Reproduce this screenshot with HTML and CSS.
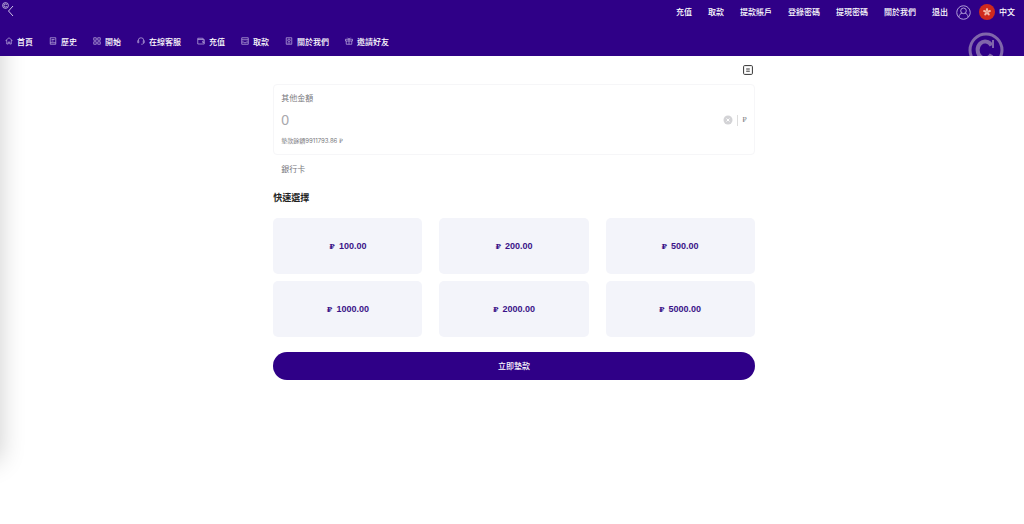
FILE: index.html
```
<!DOCTYPE html>
<html lang="zh-Hant">
<head>
  <meta charset="UTF-8">
  <title>充值</title>
  <link rel="stylesheet" href="styles.css">
</head>
<body>
  <header class="header">
    <div class="top-bar">
      <button class="back" aria-label="返回">
        <svg class="mini-logo" viewBox="0 0 8 8"><circle cx="4" cy="4" r="3.3"/><path d="M5.4 3A1.7 1.7 0 1 0 5.4 5"/></svg>
        <svg class="arrow" viewBox="0 0 7 12"><path d="M6 1 1.5 6 6 11"/></svg>
      </button>
      <nav class="links">
        <a href="#">充值</a>
        <a href="#">取款</a>
        <a href="#">提款賬戶</a>
        <a href="#">登錄密碼</a>
        <a href="#">提現密碼</a>
        <a href="#">關於我們</a>
        <a href="#">退出</a>
      </nav>
      <a class="avatar" href="#" aria-label="帳戶">
        <svg viewBox="0 0 16 16"><circle cx="8" cy="8" r="7.2"/><circle cx="8" cy="6.2" r="3"/><path d="M3 13c.4-2.600 1.700-3.800 3.200-4.200M13 13c-.4-2.600-1.700-3.800-3.200-4.200"/></svg>
      </a>
      <button class="lang">
        <svg viewBox="0 0 16 16"><circle cx="8" cy="8" r="8" fill="#cf2a1d"/><g fill="#f3b9a8"><ellipse cx="8" cy="5.800" rx="1.100" ry="1.900"/><ellipse cx="8" cy="5.800" rx="1.100" ry="1.900" transform="rotate(72 8 8)"/><ellipse cx="8" cy="5.800" rx="1.100" ry="1.900" transform="rotate(144 8 8)"/><ellipse cx="8" cy="5.800" rx="1.100" ry="1.900" transform="rotate(216 8 8)"/><ellipse cx="8" cy="5.800" rx="1.100" ry="1.900" transform="rotate(288 8 8)"/></g></svg>
        中文
      </button>
    </div>
    <nav class="menu">
      <a href="#"><svg viewBox="0 0 16 16"><path d="M8 1.500 14.500 7h-2v7h-3v-4h-3v4h-3V7h-2z"/></svg>首頁</a>
      <a href="#"><svg viewBox="0 0 16 16"><path d="M2.500 1.500h11v13h-11zM5 5h6M5 8h4M2.500 11.500h11"/></svg>歷史</a>
      <a href="#"><svg viewBox="0 0 16 16"><path d="M1.500 1.500h5v5h-5zM9.500 1.500h5v5h-5zM1.500 9.500h5v5h-5zM9.500 9.500h5v5h-5z"/></svg>開始</a>
      <a href="#"><svg viewBox="0 0 16 16"><path d="M2.500 8V7a5.500 5.500 0 0 1 11 0v1M1.500 7.500h2v4h-2zM12.500 7.500h2v4h-2zM13.500 11.500c0 2-2 3-5 3"/></svg>在線客服</a>
      <a href="#"><svg viewBox="0 0 16 16"><path d="M1.500 2.500h10M1.500 2.500v11.500h13v-9h-13M14.500 8h-3v3h3M12 2v3"/></svg>充值</a>
      <a href="#"><svg viewBox="0 0 16 16"><path d="M1.500 1.500h13v13h-13zM1.500 5.500h13M1.500 10h4l1 1.500h3l1-1.500h4"/></svg>取款</a>
      <a href="#"><svg viewBox="0 0 16 16"><path d="M2.500 1.500h11v13h-11zM5 12h6"/><circle cx="8" cy="6.500" r="2.500"/></svg>關於我們</a>
      <a href="#"><svg viewBox="0 0 16 16"><path d="M1 4.500h14v3.500H1zM2.500 8v6.500h11V8M8 4.500v10M8 4.500l-3-3M8 4.500l3-3"/></svg>邀請好友</a>
    </nav>
    <svg class="brand" viewBox="0 0 36 36"><circle cx="18" cy="18" r="16"/><path class="letter" d="M23.500 13.500A7.500 8.500 0 1 0 23.500 22.500"/><path class="serif" d="M25 8v8"/></svg>
  </header>

  <aside class="drawer" aria-hidden="true"></aside>

  <main class="deposit">
    <button class="records" aria-label="記錄">
      <svg viewBox="0 0 10 10"><rect x=".6" y=".6" width="8.800" height="8.800" rx="1"/><path d="M3.200 4h3.600M3.200 6.200h3.600"/></svg>
    </button>

    <section class="amount-box">
      <label for="amount">其他金額</label>
      <div class="amount-row">
        <input id="amount" type="text" inputmode="decimal" placeholder="0">
        <button class="clear" aria-label="清除">
          <svg viewBox="0 0 10 10"><circle cx="5" cy="5" r="4.500" fill="#d3d3d6"/><path d="M3.500 3.500l3 3M6.500 3.500l-3 3" stroke="#fff"/></svg>
        </button>
        <span class="currency">₽</span>
      </div>
      <p class="balance">墊款餘額9911793.86 <span class="rub">₽</span></p>
    </section>

    <p class="bank">銀行卡</p>

    <h2>快速選擇</h2>
    <div class="quick">
      <button><span class="rub">₽</span>100.00</button>
      <button><span class="rub">₽</span>200.00</button>
      <button><span class="rub">₽</span>500.00</button>
      <button><span class="rub">₽</span>1000.00</button>
      <button><span class="rub">₽</span>2000.00</button>
      <button><span class="rub">₽</span>5000.00</button>
    </div>

    <button class="submit">立即墊款</button>
  </main>
</body>
</html>
```

FILE: styles.css
```
* {
  box-sizing: border-box;
}

body {
  margin: 0;
  min-height: 100vh;
  position: relative;
  overflow-x: hidden;
  background: #fff;
  color: #222;
  font-family: Inter, "Noto Sans CJK TC", sans-serif;
  font-size: 8px;
  line-height: 12px;
}

button {
  padding: 0;
  border: none;
  background: none;
  color: inherit;
  font: inherit;
  cursor: pointer;
}

a {
  color: inherit;
  text-decoration: none;
}

svg {
  display: block;
  fill: none;
}

/* header */
.header {
  position: relative;
  z-index: 2;
  overflow: hidden;
  background: #2f0087;
  color: #fff;
  font-weight: 500;
}

.top-bar {
  display: flex;
  align-items: center;
  height: 24px;
  padding: 0 9px 0 2px;
}

.back {
  display: flex;
  align-items: flex-start;
  height: 20px;
  margin-right: auto;
}

.back svg {
  stroke: #cfc3e6;
}

.mini-logo {
  width: 7px;
  height: 7px;
}

.arrow {
  width: 7px;
  height: 12px;
  margin: 3px 0 0 -2px;
}

.links {
  display: flex;
  gap: 16px;
}

.avatar svg {
  width: 15px;
  height: 15px;
  margin: 0 8px;
  stroke: #b9a8dc;
}

.lang {
  display: flex;
  align-items: center;
  gap: 4px;
}

.lang svg {
  width: 16px;
  height: 16px;
}

.menu {
  display: flex;
  gap: 16px;
  padding: 12px 5px 8px;
}

.menu a {
  display: flex;
  gap: 4px;
}

.menu svg {
  width: 8px;
  height: 8px;
  margin-top: 1px;
  stroke: #b9a8dc;
  stroke-width: 1.5;
}

.brand {
  position: absolute;
  top: 32px;
  right: 20px;
  width: 36px;
  height: 36px;
  stroke: #8066ab;
  stroke-width: 3;
}

.brand .letter {
  stroke-width: 4;
}

.brand .serif {
  stroke-width: 2;
}

/* closed side drawer, only its shadow shows at the edge */
.drawer {
  position: absolute;
  top: 0;
  left: -200px;
  width: 200px;
  height: 88%;
  box-shadow: 0 0 24px rgba(0, 0, 0, 0.2);
}

/* deposit form */
.deposit {
  width: 47%;
  margin: 0 auto;
  position: relative;
  left: 2px;
}

.records {
  display: block;
  margin-left: auto;
  padding: 9px 2px;
}

.records svg {
  width: 10px;
  height: 10px;
  stroke: #333;
}

.amount-box {
  padding: 7px;
  border: 1px solid #f6f6f8;
  border-radius: 4px;
  color: #77777c;
}

.amount-box label {
  display: block;
}

.amount-row {
  display: flex;
  align-items: center;
  margin: 6px 0 5px;
}

.amount-row input {
  flex: 1;
  min-width: 0;
  height: 20px;
  padding: 0;
  border: none;
  outline: none;
  background: none;
  color: #333;
  font: 14px/20px "Liberation Sans", sans-serif;
}

.amount-row input::placeholder {
  color: #a8a8ad;
}

.clear svg {
  width: 10px;
  height: 10px;
}

.currency {
  margin-left: 4px;
  padding-left: 4px;
  border-left: 1px solid #ddd;
  font: 7px/11px "Liberation Serif", "DejaVu Serif", serif;
}

.balance {
  margin: 0;
  font-size: 6px;
  line-height: 11px;
}

.rub {
  font-family: "Liberation Serif", "DejaVu Serif", serif;
}

.bank {
  margin: 8px;
  color: #77777c;
}

h2 {
  margin: 16px 0 14px;
  font-size: 9px;
  line-height: 13px;
  font-weight: 700;
}

.quick {
  display: grid;
  grid-template-columns: repeat(3, 1fr);
  gap: 7px 17px;
}

.quick button {
  height: 56px;
  border-radius: 5px;
  background: #f3f4fa;
  color: #3b1388;
  font-family: "Liberation Sans", sans-serif;
  font-size: 9px;
  font-weight: 600;
}

.quick .rub {
  margin-right: 4px;
  font-family: "Liberation Serif", "DejaVu Serif", serif;
  font-size: 8px;
}

.submit {
  display: block;
  width: 100%;
  height: 28px;
  margin: 15px 0;
  border-radius: 14px;
  background: #2f0087;
  color: #fff;
  font-weight: 500;
}
```
